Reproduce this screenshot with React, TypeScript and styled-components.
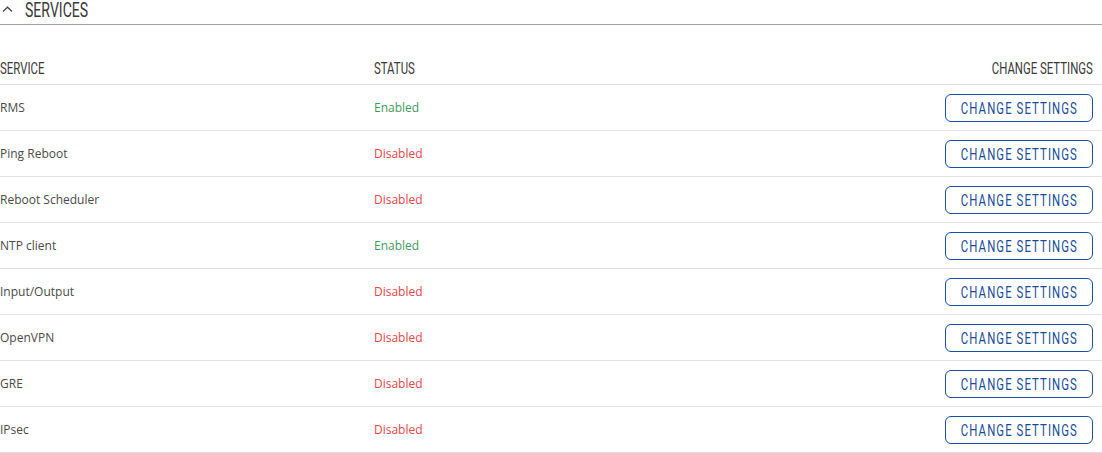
import React from 'react';
import styled, { createGlobalStyle } from 'styled-components';

const GlobalStyle = createGlobalStyle`
  body {
    margin: 0;
    background: #fff;
    font-family: "Open Sans", "Liberation Sans", sans-serif;
    color: #404040;
  }
`;

// no condensed face is installed, so Roboto is narrowed to the Oswald-like look
const Narrow = styled.span<{ $origin?: 'left' | 'right' | 'center' }>`
  display: inline-block;
  font-family: Roboto, "Liberation Sans", sans-serif;
  transform: scaleX(0.67);
  transform-origin: ${(p) => p.$origin ?? 'left'} center;
  white-space: nowrap;
`;

const Section = styled.section`
  width: 1102px;
`;

const TitleBar = styled.div`
  height: 24px;
  display: flex;
  align-items: flex-start;
  gap: 12px;
  border-bottom: 1px solid #a0a0a0;
  padding-left: 2px;
  h2 {
    margin: 0;
    font-weight: 400;
    font-size: 21px;
    color: #3a3a3a;
    line-height: 19px;
  }
  svg {
    margin-top: 6px;
  }
`;

const Table = styled.div`
  margin-top: 27px;
`;

const Row = styled.div<{ $head?: boolean }>`
  display: grid;
  grid-template-columns: 374px 1fr auto;
  align-items: center;
  height: ${(p) => (p.$head ? '32px' : '45px')};
  border-bottom: 1px solid #e2e2e2;
  padding-right: 9px;
  font-size: 12px;
`;

const HeadCell = styled.div<{ $right?: boolean }>`
  font-size: 17px;
  color: #3a3a3a;
  text-align: ${(p) => (p.$right ? 'right' : 'left')};
  line-height: 20px;
`;

const Cell = styled.div`
  color: #4a4a4a;
`;

const Status = styled.div<{ $on: boolean }>`
  color: ${(p) => (p.$on ? '#3f9a62' : '#e4474a')};
`;

const SettingsButton = styled.button`
  width: 148px;
  height: 28px;
  border: 1px solid #1552a3;
  border-radius: 6px;
  background: #fff;
  color: #1a4c98;
  font-size: 17px;
  letter-spacing: 1.6px;
  cursor: pointer;
  padding: 0;
  display: flex;
  align-items: center;
  justify-content: center;
  line-height: 20px;
`;

const services = [
  { name: 'RMS', enabled: true },
  { name: 'Ping Reboot', enabled: false },
  { name: 'Reboot Scheduler', enabled: false },
  { name: 'NTP client', enabled: true },
  { name: 'Input/Output', enabled: false },
  { name: 'OpenVPN', enabled: false },
  { name: 'GRE', enabled: false },
  { name: 'IPsec', enabled: false },
];

const App: React.FC = () => {
  return (
    <>
      <GlobalStyle />
      <Section>
        <TitleBar>
          <svg width="11" height="6" viewBox="0 0 11 6" fill="none">
            <path d="M1 5.5 L5.5 1.2 L10 5.5" stroke="#444" strokeWidth="1.3" />
          </svg>
          <h2>
            <Narrow>SERVICES</Narrow>
          </h2>
        </TitleBar>
        <Table>
          <Row $head>
            <HeadCell>
              <Narrow>SERVICE</Narrow>
            </HeadCell>
            <HeadCell>
              <Narrow>STATUS</Narrow>
            </HeadCell>
            <HeadCell $right>
              <Narrow $origin="right">CHANGE SETTINGS</Narrow>
            </HeadCell>
          </Row>
          {services.map((s) => (
            <Row key={s.name}>
              <Cell>{s.name}</Cell>
              <Status $on={s.enabled}>{s.enabled ? 'Enabled' : 'Disabled'}</Status>
              <SettingsButton>
                <Narrow $origin="center">CHANGE SETTINGS</Narrow>
              </SettingsButton>
            </Row>
          ))}
        </Table>
      </Section>
    </>
  );
};

export default App;
